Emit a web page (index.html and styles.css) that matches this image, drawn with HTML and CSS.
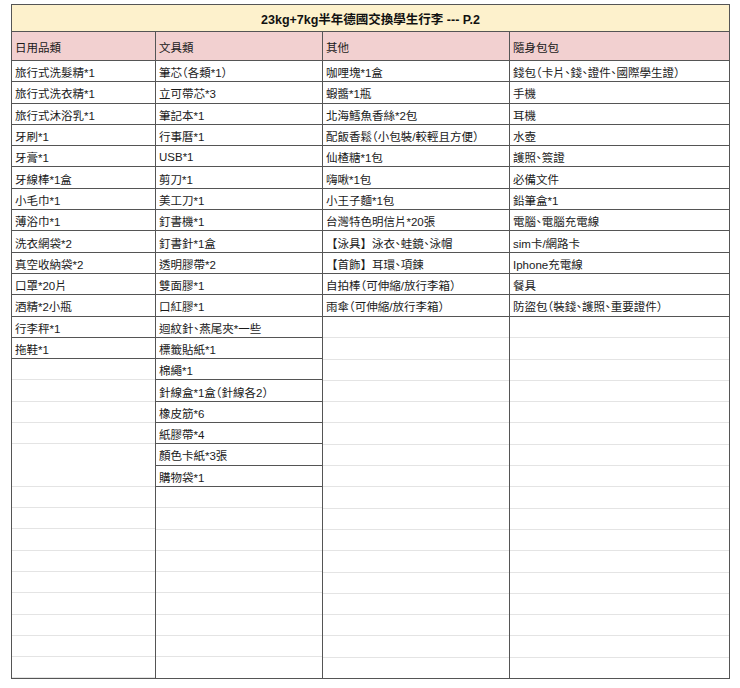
FILE: index.html
```html
<!DOCTYPE html>
<html lang="zh-Hant">
<head>
<meta charset="utf-8">
<title>23kg+7kg半年德國交換學生行李 --- P.2</title>
<link rel="stylesheet" href="styles.css">
</head>
<body>
<div class="sheet">
  <div class="title">23kg+7kg半年德國交換學生行李 --- P.2</div>
  <div class="head">
    <div class="hcell">日用品類</div>
    <div class="hcell">文具類</div>
    <div class="hcell">其他</div>
    <div class="hcell">隨身包包</div>
  </div>
  <div class="body">
    <div class="col">
      <div class="cell">旅行式洗髮精*1</div>
      <div class="cell">旅行式洗衣精*1</div>
      <div class="cell">旅行式沐浴乳*1</div>
      <div class="cell">牙刷*1</div>
      <div class="cell">牙膏*1</div>
      <div class="cell">牙線棒*1盒</div>
      <div class="cell">小毛巾*1</div>
      <div class="cell">薄浴巾*1</div>
      <div class="cell">洗衣網袋*2</div>
      <div class="cell">真空收納袋*2</div>
      <div class="cell">口罩*20片</div>
      <div class="cell">酒精*2小瓶</div>
      <div class="cell">行李秤*1</div>
      <div class="cell">拖鞋*1</div>
      <div class="fill"></div>
    </div>
    <div class="col">
      <div class="cell">筆芯（各類*1）</div>
      <div class="cell">立可帶芯*3</div>
      <div class="cell">筆記本*1</div>
      <div class="cell">行事曆*1</div>
      <div class="cell">USB*1</div>
      <div class="cell">剪刀*1</div>
      <div class="cell">美工刀*1</div>
      <div class="cell">釘書機*1</div>
      <div class="cell">釘書針*1盒</div>
      <div class="cell">透明膠帶*2</div>
      <div class="cell">雙面膠*1</div>
      <div class="cell">口紅膠*1</div>
      <div class="cell">迴紋針、燕尾夾*一些</div>
      <div class="cell">標籤貼紙*1</div>
      <div class="cell">棉繩*1</div>
      <div class="cell">針線盒*1盒（針線各2）</div>
      <div class="cell">橡皮筋*6</div>
      <div class="cell">紙膠帶*4</div>
      <div class="cell">顏色卡紙*3張</div>
      <div class="cell">購物袋*1</div>
      <div class="fill"></div>
    </div>
    <div class="col">
      <div class="cell">咖哩塊*1盒</div>
      <div class="cell">蝦醬*1瓶</div>
      <div class="cell">北海鱈魚香絲*2包</div>
      <div class="cell">配飯香鬆（小包裝/較輕且方便）</div>
      <div class="cell">仙楂糖*1包</div>
      <div class="cell">嗨啾*1包</div>
      <div class="cell">小王子麵*1包</div>
      <div class="cell">台灣特色明信片*20張</div>
      <div class="cell"><span class="fw">【泳具】</span>泳衣、蛙鏡、泳帽</div>
      <div class="cell"><span class="fw">【首飾】</span>耳環、項鍊</div>
      <div class="cell">自拍棒（可伸縮/放行李箱）</div>
      <div class="cell">雨傘（可伸縮/放行李箱）</div>
      <div class="fill"></div>
    </div>
    <div class="col">
      <div class="cell">錢包（卡片、錢、證件、國際學生證）</div>
      <div class="cell">手機</div>
      <div class="cell">耳機</div>
      <div class="cell">水壺</div>
      <div class="cell">護照、簽證</div>
      <div class="cell">必備文件</div>
      <div class="cell">鉛筆盒*1</div>
      <div class="cell">電腦、電腦充電線</div>
      <div class="cell">sim卡/網路卡</div>
      <div class="cell">Iphone充電線</div>
      <div class="cell">餐具</div>
      <div class="cell">防盜包（裝錢、護照、重要證件）</div>
      <div class="fill"></div>
    </div>
  </div>
</div>
</body>
</html>
```
FILE: styles.css
```css
html, body {
  margin: 0;
  padding: 0;
  background: #ffffff;
}
body {
  padding: 4px 0 0 11px;
  font-family: "Liberation Sans", "Noto Sans CJK TC", sans-serif;
  font-size: 11.5px;
  color: #1a1a1a;
}
.sheet {
  width: 719px;
  border-left: 1px solid #555;
  border-top: 1px solid #555;
  box-sizing: border-box;
}
.title {
  height: 27px;
  box-sizing: border-box;
  background: #fdf1cc;
  border-right: 1px solid #555;
  border-bottom: 1px solid #555;
  display: flex;
  align-items: center;
  justify-content: center;
  padding-top: 1px;
  font-weight: bold;
  font-size: 12.5px;
  color: #111;
}
.head, .body {
  display: grid;
  grid-template-columns: 144px 167px 187px 220px;
}
.hcell {
  height: 29px;
  box-sizing: border-box;
  background: #f2d0d0;
  border-right: 1px solid #555;
  border-bottom: 1px solid #555;
  display: flex;
  align-items: center;
  padding: 1px 0 0 3px;
}
.body {
  height: 617.7px;
}
.col {
  display: flex;
  flex-direction: column;
  border-right: 1px solid #555;
  min-width: 0;
}
.cell {
  height: 21.3px;
  flex: none;
  box-sizing: border-box;
  border-bottom: 1px solid #555;
  display: flex;
  align-items: center;
  padding: 2px 0 0 3px;
  white-space: nowrap;
  overflow: hidden;
  font-feature-settings: "halt";
}
.fw {
  font-feature-settings: normal;
}
.fill {
  flex: 1;
  border-bottom: 1px solid #555;
  background: repeating-linear-gradient(to bottom, transparent 0, transparent 20.3px, #e4e4e4 20.3px, #e4e4e4 21.3px);
}
```
